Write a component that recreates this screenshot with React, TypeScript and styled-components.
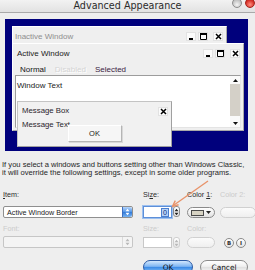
import * as React from "react";
import styled, { createGlobalStyle } from "styled-components";

const Global = createGlobalStyle`
  html, body {
    margin: 0;
    padding: 0;
  }
  body {
    width: 255px;
    height: 270px;
    overflow: hidden;
    background: #eeeeee;
    font-family: "Liberation Sans", Arial, sans-serif;
    color: #222;
  }
`;

const Dialog = styled.div`
  position: relative;
  width: 255px;
  height: 270px;
  overflow: hidden;
  background: #eeeeee;
`;

const TitleBar = styled.div`
  position: relative;
  height: 12px;
  border-bottom: 1px solid #a9a9a9;
  background: linear-gradient(#f2f2f2, #e2e2e2);
  display: flex;
  align-items: center;
  justify-content: center;
`;

const Title = styled.span`
  font-family: "DejaVu Sans", sans-serif;
  font-size: 9.6px;
  line-height: 12px;
  color: #2b2b2b;
`;

const Lights = styled.div`
  position: absolute;
  right: 0;
  top: -2px;
  display: flex;
  gap: 3px;
`;

const Light = styled.span<{ $red?: boolean }>`
  width: 10px;
  height: 10px;
  box-sizing: border-box;
  border-radius: 50%;
  border: 1px solid ${(p) => (p.$red ? "#a3231c" : "#8e8e8e")};
  background: ${(p) =>
    p.$red
      ? "radial-gradient(circle at 50% 70%, #ff8d7f, #d8332a 60%, #b42018)"
      : "radial-gradient(circle at 50% 70%, #f4f4f4, #c6c6c6 60%, #a8a8a8)"};
`;

/* ---- preview canvas ---- */

const Preview = styled.div`
  position: relative;
  margin: 6px 0 0 5px;
  width: 243px;
  height: 132px;
  background: #00007c;
  font-size: 8px;
`;

const Pane = styled.div`
  position: absolute;
  box-sizing: border-box;
  background: #efefef;
  border: 1px solid;
  border-color: #ffffff #a9a9a9 #a9a9a9 #ffffff;
  display: flex;
  flex-direction: column;
`;

const InactivePane = styled(Pane)`
  left: 7px;
  top: 7px;
  width: 215px;
  height: 40px;
`;

const ActivePane = styled(Pane)`
  left: 7px;
  top: 24px;
  width: 232px;
  height: 88px;
`;

const MessagePane = styled(Pane)`
  left: 12px;
  top: 82px;
  width: 155px;
  height: 46px;
  background: #f1f1f1;
  border-color: #c4c4c4 #a0a0a0 #a0a0a0 #c4c4c4;
`;

const Caption = styled.div<{ $muted?: boolean; $h?: number }>`
  height: ${(p) => p.$h ?? 18}px;
  flex: none;
  display: flex;
  align-items: center;
  padding: 0 3px 0 ${(p) => (p.$muted ? 2 : 4)}px;
  color: ${(p) => (p.$muted ? "#8e8e8e" : "#1a1a1a")};
  white-space: nowrap;
`;

const CapButtons = styled.div`
  margin-left: auto;
  display: flex;
  gap: 2px;
`;

const CapButton = styled.span<{ $close?: boolean }>`
  width: 10px;
  height: 9px;
  box-sizing: border-box;
  display: flex;
  align-items: center;
  justify-content: center;
  background: #fbfbfb;
  border: 1px solid #e2e2e2;
  margin-left: ${(p) => (p.$close ? 3 : 0)}px;
`;

const MenuRow = styled.div`
  height: 12px;
  flex: none;
  display: flex;
  align-items: center;
  gap: 9px;
  padding-left: 7px;
`;

const MenuItem = styled.span<{ $state?: "disabled" | "selected" }>`
  color: ${(p) =>
    p.$state === "disabled"
      ? "#d4d4d4"
      : p.$state === "selected"
      ? "#3b2342"
      : "#141414"};
  text-shadow: ${(p) => (p.$state === "disabled" ? "1px 1px 0 #fff" : "none")};
`;

const TextArea = styled.div`
  flex: 1;
  margin: 0 2px 2px 2px;
  background: #fff;
  border: 1px solid;
  border-color: #9c9c9c #e4e4e4 #e4e4e4 #9c9c9c;
  display: flex;
`;

const WindowText = styled.div`
  flex: 1;
  padding: 6px 0 0 1px;
  line-height: 8px;
`;

const Scrollbar = styled.div`
  width: 10px;
  display: flex;
  flex-direction: column;
  background: #fafafa;
`;

const ScrollArrow = styled.span`
  height: 8px;
  flex: none;
  display: flex;
  align-items: center;
  justify-content: center;
`;

const Thumb = styled.span`
  height: 32px;
  flex: none;
  background: #d4d0c8;
`;

const Track = styled.span`
  flex: 1;
`;

const MsgBody = styled.div`
  display: flex;
  flex-direction: column;
  padding: 1px 0 0 4px;
`;

const MsgText = styled.span`
  line-height: 8px;
  font-size: 7.8px;
  color: #2a1f2c;
`;

const MsgOk = styled.span`
  position: relative;
  align-self: center;
  margin: -4px 0 0 -4px;
  width: 54px;
  height: 17px;
  box-sizing: border-box;
  display: flex;
  align-items: center;
  justify-content: center;
  background: #f6f6f6;
  border: 1px solid;
  border-color: #ffffff #b5b5b5 #b5b5b5 #ffffff;
  box-shadow: 1px 1px 0 #d8d8d8;
  font-size: 7.5px;
  color: #222;
`;

/* ---- form ---- */

const Note = styled.p`
  margin: 10px 0 0 2px;
  font-size: 7.6px;
  line-height: 8px;
  color: #1f1f1f;
  white-space: nowrap;
`;

const Form = styled.div`
  display: grid;
  grid-template-columns: 140px 44px 33px 38px;
  grid-template-rows: 8px 19px 15px 15px;
  margin: 14px 0 0 3px;
  font-size: 7.2px;
`;

const Label = styled.span<{ $dim?: boolean }>`
  align-self: end;
  line-height: 8px;
  white-space: nowrap;
  color: ${(p) => (p.$dim ? "#cbcbcb" : "#2a2a2a")};
  u {
    text-decoration-thickness: 1px;
  }
`;

const Select = styled.div<{ $disabled?: boolean }>`
  align-self: end;
  box-sizing: border-box;
  width: 130px;
  height: 12px;
  display: flex;
  align-items: center;
  padding-left: 3px;
  border: 1px solid ${(p) => (p.$disabled ? "#c6c6c6" : "#8f8f8f")};
  border-radius: 2px;
  background: ${(p) => (p.$disabled ? "#f4f4f4" : "#ffffff")};
  color: #1a1a1a;
  white-space: nowrap;
`;

const PopArrows = styled.span<{ $disabled?: boolean }>`
  margin-left: auto;
  align-self: stretch;
  width: 9px;
  display: flex;
  align-items: center;
  justify-content: center;
  border-radius: 0 2px 2px 0;
  border-left: 1px solid ${(p) => (p.$disabled ? "#dadada" : "#3d6fc0")};
  background: ${(p) =>
    p.$disabled
      ? "#f4f4f4"
      : "linear-gradient(#b7d6fb, #4f93e6 50%, #2f78d8 51%, #79b5f2)"};
`;

const SizeBox = styled.div`
  align-self: end;
  display: flex;
  gap: 1px;
  width: 37px;
`;

const SizeInput = styled.div<{ $focused?: boolean; $disabled?: boolean }>`
  box-sizing: border-box;
  width: 29px;
  height: ${(p) => (p.$disabled ? 11 : 12)}px;
  display: flex;
  align-items: center;
  justify-content: flex-end;
  padding-right: 2px;
  background: #fff;
  border: 1px solid
    ${(p) => (p.$focused ? "#5d8fd8" : p.$disabled ? "#c8c8c8" : "#8f8f8f")};
  box-shadow: ${(p) => (p.$focused ? "0 0 0 1px #9cc0f0" : "none")};
`;

const Selection = styled.span`
  background: #b5d1f7;
  color: #10307c;
  border: 1px solid #4b7fd0;
  line-height: 7px;
  padding: 0 1px;
`;

const Stepper = styled.span<{ $disabled?: boolean }>`
  box-sizing: border-box;
  width: 7px;
  height: 11px;
  display: flex;
  align-items: center;
  justify-content: center;
  border: 1px solid ${(p) => (p.$disabled ? "#cfcfcf" : "#8c8c8c")};
  border-radius: 3px;
  background: linear-gradient(#ffffff, #e6e6e6);
`;

const ColorPill = styled.span<{ $dim?: boolean; $w?: number }>`
  align-self: end;
  box-sizing: border-box;
  width: ${(p) => p.$w ?? 28}px;
  height: 11px;
  display: flex;
  align-items: center;
  gap: 2px;
  padding: 0 3px;
  border-radius: 6px;
  border: 1px solid ${(p) => (p.$dim ? "#d0d0d0" : "#8a8a8a")};
  background: ${(p) =>
    p.$dim ? "linear-gradient(#fbfbfb, #efefef)" : "linear-gradient(#ffffff, #e2e2e2)"};
`;

const Swatch = styled.span`
  width: 13px;
  height: 6px;
  box-sizing: border-box;
  background: #d7d3c3;
  border: 1px solid #4a4a4a;
`;

const StyleToggles = styled.div`
  align-self: end;
  display: flex;
  gap: 2px;
  margin-left: 4px;
`;

const Toggle = styled.span`
  width: 10px;
  height: 10px;
  box-sizing: border-box;
  border-radius: 50%;
  border: 1px solid #8a8a8a;
  background: linear-gradient(#ffffff, #e4e4e4);
  display: flex;
  align-items: center;
  justify-content: center;
  font-family: "DejaVu Sans", sans-serif;
  font-size: 5.5px;
  font-weight: bold;
  color: #333;
`;

const Buttons = styled.div`
  display: flex;
  justify-content: flex-end;
  gap: 7px;
  padding-right: 7px;
  margin-top: 12px;
`;

const PushButton = styled.span<{ $default?: boolean; $w: number }>`
  box-sizing: border-box;
  width: ${(p) => p.$w}px;
  height: 14px;
  display: flex;
  align-items: center;
  justify-content: center;
  border-radius: 7px;
  font-family: "DejaVu Sans", sans-serif;
  font-size: 7.4px;
  color: #111;
  border: 1px solid ${(p) => (p.$default ? "#2b5aa4" : "#8a8a8a")};
  background: ${(p) =>
    p.$default
      ? "linear-gradient(#d2e7fd, #7fb6f3 45%, #3b8ae6 52%, #8ec7fb)"
      : "linear-gradient(#ffffff, #f0f0f0 45%, #e0e0e0 52%, #fbfbfb)"};
`;

const Pointer = styled.svg`
  position: absolute;
  left: 0;
  top: 0;
  pointer-events: none;
`;

/* ---- little drawings ---- */

const MinGlyph = () => (
  <svg width="7" height="7" viewBox="0 0 7 7">
    <rect x="1" y="5" width="4" height="2" fill="#000" />
  </svg>
);

const MaxGlyph = () => (
  <svg width="7" height="7" viewBox="0 0 7 7">
    <path d="M0.5 0.5h6v6h-6z" fill="none" stroke="#000" />
    <rect x="0" y="0" width="7" height="2" fill="#000" />
  </svg>
);

const CloseGlyph = () => (
  <svg width="7" height="7" viewBox="0 0 7 7">
    <path d="M1 1l5 5M6 1l-5 5" stroke="#000" strokeWidth="1.5" />
  </svg>
);

const Tri = ({ up, color = "#111" }: { up?: boolean; color?: string }) => (
  <svg width="5" height="3" viewBox="0 0 5 3">
    <path d={up ? "M0 3L2.5 0L5 3z" : "M0 0L5 0L2.5 3z"} fill={color} />
  </svg>
);

const UpDown = ({ color }: { color: string }) => (
  <svg width="5" height="8" viewBox="0 0 5 8">
    <path d="M0.5 3.2L2.5 0.8L4.5 3.2z M0.5 4.8L4.5 4.8L2.5 7.2z" fill={color} />
  </svg>
);

function CaptionButtons() {
  return (
    <CapButtons>
      <CapButton>
        <MinGlyph />
      </CapButton>
      <CapButton>
        <MaxGlyph />
      </CapButton>
      <CapButton $close>
        <CloseGlyph />
      </CapButton>
    </CapButtons>
  );
}

export default function App() {
  return (
    <Dialog>
      <Global />
      <TitleBar>
        <Title>Advanced Appearance</Title>
        <Lights>
          <Light />
          <Light $red />
        </Lights>
      </TitleBar>

      <Preview>
        <InactivePane>
          <Caption $muted $h={19}>
            Inactive Window
            <CaptionButtons />
          </Caption>
        </InactivePane>

        <ActivePane>
          <Caption $h={19}>
            Active Window
            <CaptionButtons />
          </Caption>
          <MenuRow>
            <MenuItem>Normal</MenuItem>
            <MenuItem $state="disabled">Disabled</MenuItem>
            <MenuItem $state="selected">Selected</MenuItem>
          </MenuRow>
          <TextArea>
            <WindowText>Window Text</WindowText>
            <Scrollbar>
              <ScrollArrow>
                <Tri up />
              </ScrollArrow>
              <Thumb />
              <Track />
              <ScrollArrow>
                <Tri />
              </ScrollArrow>
            </Scrollbar>
          </TextArea>
        </ActivePane>

        <MessagePane>
          <Caption $h={18}>
            <MsgText>Message Box</MsgText>
            <CapButtons>
              <CapButton $close>
                <CloseGlyph />
              </CapButton>
            </CapButtons>
          </Caption>
          <MsgBody>
            <MsgText>Message Text</MsgText>
            <MsgOk>OK</MsgOk>
          </MsgBody>
        </MessagePane>
      </Preview>

      <Note>
        If you select a windows and buttons setting other than Windows Classic,
        <br />
        it will override the following settings, except in some older programs.
      </Note>

      <Form>
        <Label>
          <u>I</u>tem:
        </Label>
        <Label>
          Si<u>z</u>e:
        </Label>
        <Label>
          Color <u>1</u>:
        </Label>
        <Label $dim>Color 2:</Label>

        <Select>
          Active Window Border
          <PopArrows>
            <UpDown color="#ffffff" />
          </PopArrows>
        </Select>
        <SizeBox>
          <SizeInput $focused>
            <Selection>0</Selection>
          </SizeInput>
          <Stepper>
            <UpDown color="#222" />
          </Stepper>
        </SizeBox>
        <ColorPill>
          <Swatch />
          <Tri color="#222" />
        </ColorPill>
        <ColorPill $dim $w={36} />

        <Label $dim>Font:</Label>
        <Label $dim>Size:</Label>
        <Label $dim>Color:</Label>
        <span />

        <Select $disabled>
          <PopArrows $disabled>
            <UpDown color="#b8b8b8" />
          </PopArrows>
        </Select>
        <SizeBox>
          <SizeInput $disabled />
          <Stepper $disabled>
            <UpDown color="#b8b8b8" />
          </Stepper>
        </SizeBox>
        <ColorPill $dim />
        <StyleToggles>
          <Toggle>B</Toggle>
          <Toggle>I</Toggle>
        </StyleToggles>
      </Form>

      <Buttons>
        <PushButton $default $w={50}>
          OK
        </PushButton>
        <PushButton $w={48}>Cancel</PushButton>
      </Buttons>

      <Pointer width="255" height="270" viewBox="0 0 255 270">
        <path d="M208 181L174 205" stroke="#e8936a" strokeWidth="1.4" fill="none" />
        <path
          d="M178.6 204.8L172.5 206.4L175.3 200.6"
          stroke="#e8936a"
          strokeWidth="1.4"
          fill="none"
        />
      </Pointer>
    </Dialog>
  );
}
